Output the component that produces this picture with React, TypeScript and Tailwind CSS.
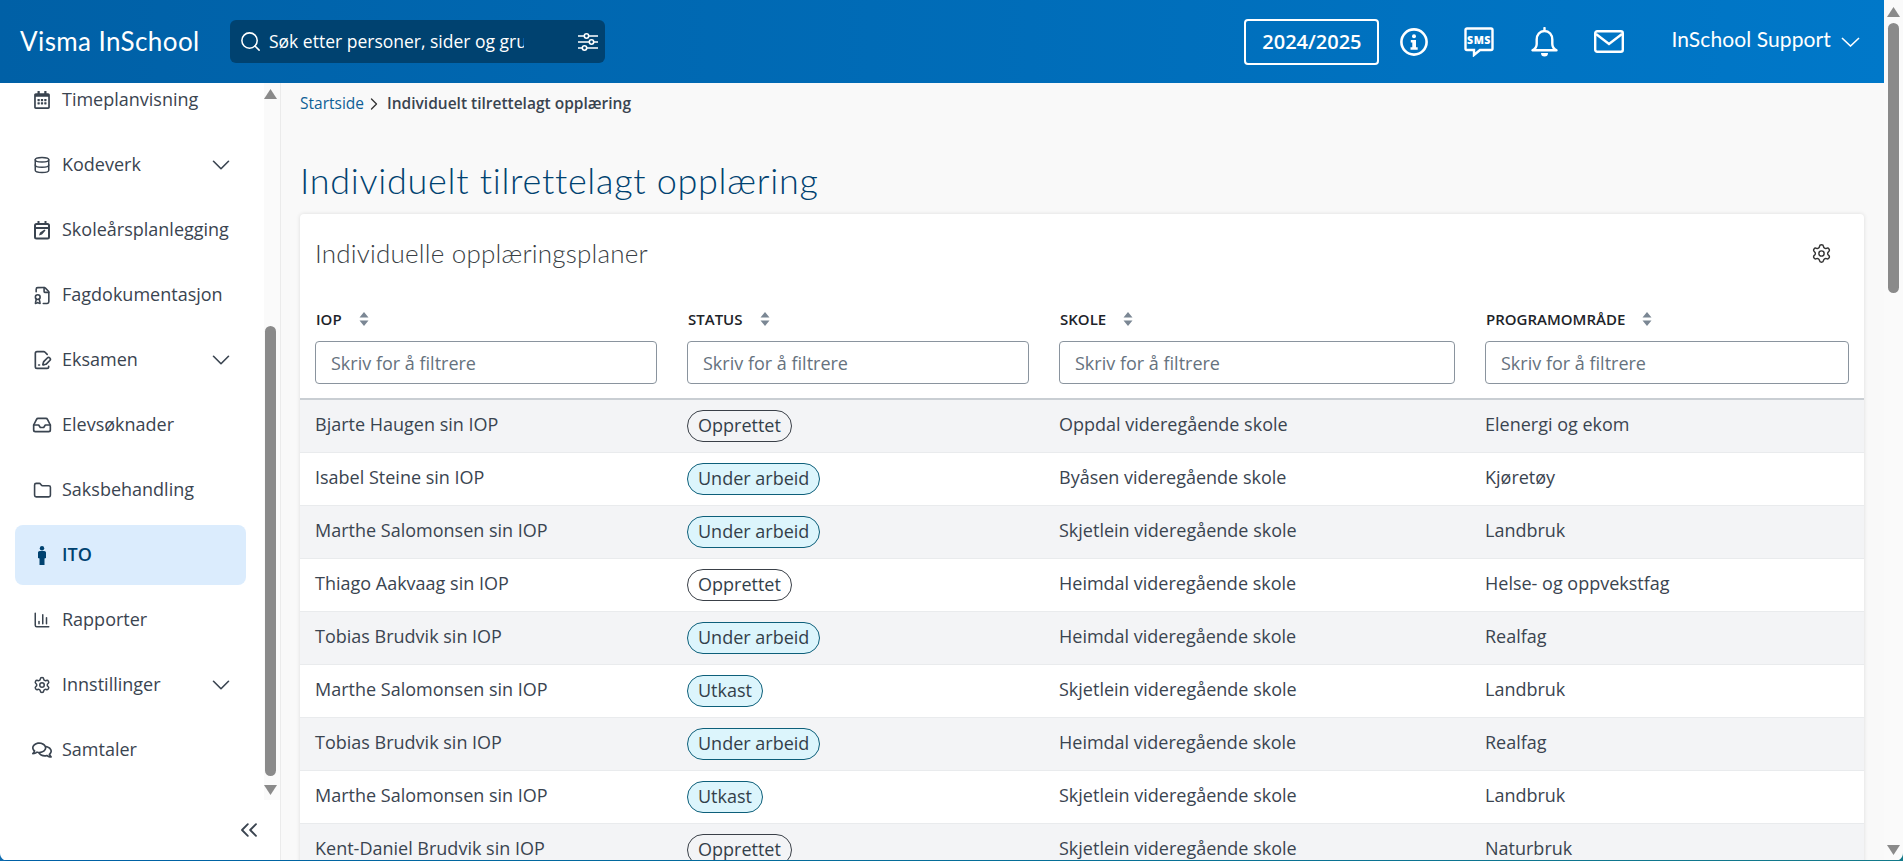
import { ChevronDown, ChevronRight, ChevronsLeft, Search, Settings, Database, FileBadge, FilePenLine, Inbox, Folder, ChartColumn } from "lucide-react";
import { FaRegCalendarAlt, FaRegComments } from "react-icons/fa";
import type { ReactNode } from "react";

const sans = "font-['Open_Sans',sans-serif]";

function PlanIcon() {
  return (
    <svg width="18" height="20" viewBox="0 0 18 20" fill="none" stroke="currentColor" strokeWidth="2">
      <rect x="2" y="4" width="14" height="14.500" rx="1.500" />
      <path d="M2 8h14M5.500 1v3M12.500 1v3" />
      <path d="M6 15.500l1-3 4.500-3 1 1-3.500 4z" fill="currentColor" stroke="none" />
    </svg>
  );
}

function PersonIcon() {
  return (
    <svg width="8" height="19" viewBox="0 0 8 19" fill="currentColor">
      <circle cx="4" cy="2.200" r="2.200" />
      <path d="M1.800 5h4.400C7.300 5 8 5.800 8 6.800V12l-1.500.5V19h-5v-6.500L0 12V6.800C0 5.800.7 5 1.800 5z" />
    </svg>
  );
}

const navItems: { label: string; icon: ReactNode; chevron?: boolean; active?: boolean }[] = [
  { label: "Timeplanvisning", icon: <FaRegCalendarAlt size={18} /> },
  { label: "Kodeverk", icon: <Database size={18} />, chevron: true },
  { label: "Skoleårsplanlegging", icon: <PlanIcon /> },
  { label: "Fagdokumentasjon", icon: <FileBadge size={19} /> },
  { label: "Eksamen", icon: <FilePenLine size={20} />, chevron: true },
  { label: "Elevsøknader", icon: <Inbox size={20} /> },
  { label: "Saksbehandling", icon: <Folder size={19} /> },
  { label: "ITO", icon: <PersonIcon />, active: true },
  { label: "Rapporter", icon: <ChartColumn size={18} /> },
  { label: "Innstillinger", icon: <Settings size={18} />, chevron: true },
  { label: "Samtaler", icon: <FaRegComments size={20} /> },
];

type Status = "Opprettet" | "Under arbeid" | "Utkast";

const rows: [string, Status, string, string][] = [
  ["Bjarte Haugen sin IOP", "Opprettet", "Oppdal videregående skole", "Elenergi og ekom"],
  ["Isabel Steine sin IOP", "Under arbeid", "Byåsen videregående skole", "Kjøretøy"],
  ["Marthe Salomonsen sin IOP", "Under arbeid", "Skjetlein videregående skole", "Landbruk"],
  ["Thiago Aakvaag sin IOP", "Opprettet", "Heimdal videregående skole", "Helse- og oppvekstfag"],
  ["Tobias Brudvik sin IOP", "Under arbeid", "Heimdal videregående skole", "Realfag"],
  ["Marthe Salomonsen sin IOP", "Utkast", "Skjetlein videregående skole", "Landbruk"],
  ["Tobias Brudvik sin IOP", "Under arbeid", "Heimdal videregående skole", "Realfag"],
  ["Marthe Salomonsen sin IOP", "Utkast", "Skjetlein videregående skole", "Landbruk"],
  ["Kent-Daniel Brudvik sin IOP", "Opprettet", "Skjetlein videregående skole", "Naturbruk"],
];

const columns = ["IOP", "STATUS", "SKOLE", "PROGRAMOMRÅDE"];

function SortIcon() {
  return (
    <svg width="10" height="14" viewBox="0 0 10 14" className="ml-[17px] fill-[#7b8794]">
      <path d="M5 0l4.500 5.500h-9zM5 14L.5 8.500h9z" />
    </svg>
  );
}

function Badge({ status }: { status: Status }) {
  const tone = status === "Opprettet" ? "border-[#3a4048]" : "border-[#0d5f7a] bg-[#dcf5fc]";
  return (
    <span className={`inline-flex h-8 items-center rounded-full border px-[10px] pb-[1px] text-[18px] text-[#333f4a] ${tone}`}>
      {status}
    </span>
  );
}

function FilterIcon() {
  return (
    <svg width="20" height="18" viewBox="0 0 20 18" fill="none" stroke="currentColor" strokeWidth="1.600" className="ml-auto">
      <path d="M0 3h6M11 3h9M0 9h11M16 9h4M0 15h4M9 15h11" />
      <circle cx="8.500" cy="3" r="2.200" />
      <circle cx="13.500" cy="9" r="2.200" />
      <circle cx="6.500" cy="15" r="2.200" />
    </svg>
  );
}

function InfoIcon() {
  return (
    <svg width="28" height="28" viewBox="0 0 28 28" className="ml-[21px]">
      <circle cx="14" cy="14" r="12.600" fill="none" stroke="currentColor" strokeWidth="2.600" />
      <circle cx="14" cy="8.300" r="2" fill="currentColor" />
      <path d="M10.800 12h5.200v7.300h1.700v2.500h-7.200v-2.500h1.800v-4.800h-1.500z" fill="currentColor" />
    </svg>
  );
}

function SmsIcon() {
  return (
    <svg width="30" height="30" viewBox="0 0 30 30" className="ml-[36px]">
      <path d="M3 1.500h24A1.500 1.500 0 0 1 28.500 3v18.500A1.500 1.500 0 0 1 27 23H16l-6 5v-5H3a1.500 1.500 0 0 1-1.500-1.500V3A1.500 1.500 0 0 1 3 1.500z" fill="none" stroke="currentColor" strokeWidth="2.400" />
      <text x="15" y="16.500" textAnchor="middle" fontSize="10.500" fontWeight="800" letterSpacing="0.500" fill="currentColor" fontFamily="Open Sans, sans-serif">SMS</text>
    </svg>
  );
}

function BellIcon() {
  return (
    <svg width="27" height="30" viewBox="0 0 27 30" fill="none" stroke="currentColor" strokeWidth="2.400" className="ml-[37px]">
      <path d="M13.500 4c-4.800 0-7.800 3.800-7.800 8.500v4.500c0 2.800-1.800 5-4.200 6.300h24c-2.400-1.300-4.200-3.500-4.200-6.300v-4.500c0-4.700-3-8.500-7.800-8.500zM13.500 1v3" strokeLinejoin="round" strokeLinecap="round" />
      <path d="M10 26h7a3.500 3.500 0 0 1-7 0z" fill="currentColor" stroke="none" />
    </svg>
  );
}

function MailIcon() {
  return (
    <svg width="30" height="23" viewBox="0 0 30 23" fill="none" stroke="currentColor" strokeWidth="2.400" className="ml-[36px]">
      <rect x="1.200" y="1.200" width="27.600" height="20.600" rx="2" />
      <path d="M2 4l13 10L28 4" />
    </svg>
  );
}

function Scrollbar({ thumb, className, bottom }: { thumb: string; className: string; bottom: string }) {
  return (
    <div className={`flex flex-col items-center bg-[#fafafa] ${className}`}>
      <svg width="13" height="10" viewBox="0 0 13 10" className="shrink-0 fill-[#8a8a8a]"><path d="M6.500 0L13 10H0z" /></svg>
      <div className={`w-[11px] rounded-full bg-[#8a8a8a] ${thumb}`} />
      <svg width="13" height="10" viewBox="0 0 13 10" className={`mt-auto shrink-0 fill-[#8a8a8a] ${bottom}`}><path d="M0 0h13L6.500 10z" /></svg>
    </div>
  );
}

export default function App() {
  return (
    <div className={`relative flex h-[861px] w-[1903px] overflow-hidden bg-[#f9f9f9] ${sans}`}>
      <div className="flex min-w-0 flex-1 flex-col">
        <header className="flex h-[83px] shrink-0 items-center bg-gradient-to-r from-[#0060a6] to-[#0078c9] text-white">
          <div className="ml-5 w-[210px] font-['Lato',sans-serif] text-[26px] tracking-[0.4px]">Visma InSchool</div>
          <div className="flex h-[43px] w-[375px] items-center rounded-md bg-[#004270] pl-[9px] pr-[7px]">
            <Search size={23} strokeWidth={1.6} />
            <span className="ml-[7px] w-[255px] overflow-hidden whitespace-nowrap text-[17.5px]">Søk etter personer, sider og grupper</span>
            <FilterIcon />
          </div>
          <div className="ml-auto flex items-center">
            <div className="flex h-[46px] w-[135px] items-center justify-center rounded border-2 border-white text-[20px] font-semibold">2024/2025</div>
            <InfoIcon />
            <SmsIcon />
            <BellIcon />
            <MailIcon />
            <span className="ml-[47px] mt-[-6px] font-['Lato',sans-serif] text-[21px] tracking-[0.1px]">InSchool Support</span>
            <svg width="19" height="10" viewBox="0 0 19 10" fill="none" stroke="currentColor" strokeWidth="1.600" className="ml-[10px] mr-[24px]"><path d="M1 1l8.500 8L18 1" /></svg>
          </div>
        </header>
        <div className="flex min-h-0 flex-1">
          <aside className="flex w-[281px] shrink-0 flex-col border-r border-[#ebebeb] bg-white">
            <div className="flex min-h-0 flex-1">
              <nav className="w-[264px] overflow-hidden pl-[15px] pr-[18px]">
                <div className="mt-[-13px]">
                  {navItems.map((item) => (
                    <div
                      key={item.label}
                      className={`mb-[5px] flex h-[60px] items-center rounded-lg pl-[17px] pr-[10px] text-[18px] ${item.active ? "bg-[#dbecfd] font-semibold text-[#004270]" : "text-[#3a4450]"}`}
                    >
                      <span className="flex w-[20px] justify-center">{item.icon}</span>
                      <span className="ml-[10px] pb-[1px]">{item.label}</span>
                      {item.chevron && <ChevronDown size={30} strokeWidth={1.3} className="ml-auto" />}
                    </div>
                  ))}
                </div>
              </nav>
              <Scrollbar className="w-[16px] pr-[3px] pt-[6px]" thumb="mt-[227px] h-[450px]" bottom="mb-[5px]" />
            </div>
            <div className="flex h-[61px] shrink-0 justify-end pr-[17px] pt-[16px] text-[#3a4450]">
              <ChevronsLeft size={28} strokeWidth={1.6} />
            </div>
          </aside>
          <main className="min-w-0 flex-1 overflow-hidden pl-[19px] pr-[20px]">
            <div className="mt-[9px] flex items-center text-[15.5px]">
              <span className="text-[#0f5f96]">Startside</span>
              <ChevronRight size={20} strokeWidth={1.6} className="text-[#333]" />
              <span className="ml-[3px] font-semibold text-[#3a4450]">Individuelt tilrettelagt opplæring</span>
            </div>
            <h1 className="mt-[42px] font-['Lato',sans-serif] text-[36px] font-light leading-[46px] tracking-[0.7px] text-[#004270]">Individuelt tilrettelagt opplæring</h1>
            <section className="mt-[11px] rounded-t bg-white shadow-[0_0_4px_rgba(0,0,0,0.12)]">
              <div className="flex h-[82px] items-center pb-[4px] pl-[15px] pr-[32px]">
                <h2 className="font-['Lato',sans-serif] text-[26px] font-light tracking-[0.2px] text-[#3a3f45]">Individuelle opplæringsplaner</h2>
                <Settings size={21} strokeWidth={1.6} className="ml-auto text-[#333]" />
              </div>
              <div className="grid h-[104px] grid-cols-[372px_372px_426px_394px] border-b-2 border-[#c9ced3]">
                {columns.map((col) => (
                  <div key={col} className="px-[15px] pt-[13px]">
                    <div className="flex h-[20px] items-center pl-[1px] text-[15px] font-semibold text-[#1d2329]">
                      {col}
                      <SortIcon />
                    </div>
                    <input
                      readOnly
                      placeholder="Skriv for å filtrere"
                      className={`mt-[12px] h-[43px] w-full rounded border border-[#8a949e] bg-white px-[15px] text-[18px] outline-none placeholder:text-[#66727e] ${sans}`}
                    />
                  </div>
                ))}
              </div>
              {rows.map((row, i) => (
                <div
                  key={i}
                  className={`grid h-[53px] grid-cols-[372px_372px_426px_394px] items-center border-b border-[#e9ebed] text-[18px] text-[#3a4450] ${i % 2 === 0 ? "bg-[#f3f4f6]" : "bg-white"}`}
                >
                  <div className="px-[15px] pb-[3px]">{row[0]}</div>
                  <div className="px-[15px]"><Badge status={row[1]} /></div>
                  <div className="px-[15px] pb-[3px]">{row[2]}</div>
                  <div className="px-[15px] pb-[3px]">{row[3]}</div>
                </div>
              ))}
            </section>
          </main>
        </div>
      </div>
      <Scrollbar className="w-[19px] shrink-0 pt-[7px]" thumb="mt-[6px] h-[270px]" bottom="mb-[6px]" />
      {/* window frame at the bottom edge */}
      <div className="pointer-events-none absolute inset-x-0 bottom-0 h-px bg-gradient-to-r from-[#0060a6] to-[#137a8a]" />
      <svg width="8" height="8" viewBox="0 0 8 8" className="pointer-events-none absolute bottom-0 left-0 fill-[#0f6cb0]"><path d="M0 0c0 4 3 8 8 8H0z" /></svg>
      <svg width="8" height="8" viewBox="0 0 8 8" className="pointer-events-none absolute bottom-0 right-0 fill-[#137a8a]"><path d="M8 0c0 4-3 8-8 8h8z" /></svg>
    </div>
  );
}
